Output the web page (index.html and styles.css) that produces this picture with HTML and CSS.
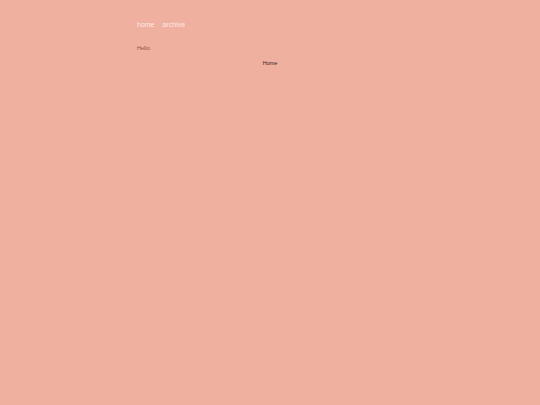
FILE: index.html
```
<!DOCTYPE html>
<html>
<head>
<meta charset="utf-8">
<link rel="stylesheet" href="styles.css">
</head>
<body>
<div class="wrap">
  <nav class="nav">
    <a class="nav-link" href="#">home</a>
    <a class="nav-link" href="#">archive</a>
  </nav>
  <p class="hello">Hello.</p>
</div>
<h1 class="title">Home</h1>
</body>
</html>
```
FILE: styles.css
```
html, body {
  margin: 0;
  padding: 0;
  background: #efb0a0;
  font-family: "Liberation Sans", Arial, sans-serif;
}
.wrap {
  width: 266px;
  margin: 0 auto;
  padding-top: 20px;
}
.nav {
  display: flex;
  gap: 8px;
}
.nav-link {
  color: #fde8e0;
  text-decoration: none;
  font-size: 7px;
  line-height: 10px;
}
.hello {
  margin: 14px 0 0 0;
  font-size: 5.5px;
  line-height: 8px;
  color: #8f5244;
}
.title {
  margin: 7px 0 0 0;
  text-align: center;
  font-size: 5.5px;
  line-height: 8px;
  font-weight: normal;
  color: #3a2420;
}
```
